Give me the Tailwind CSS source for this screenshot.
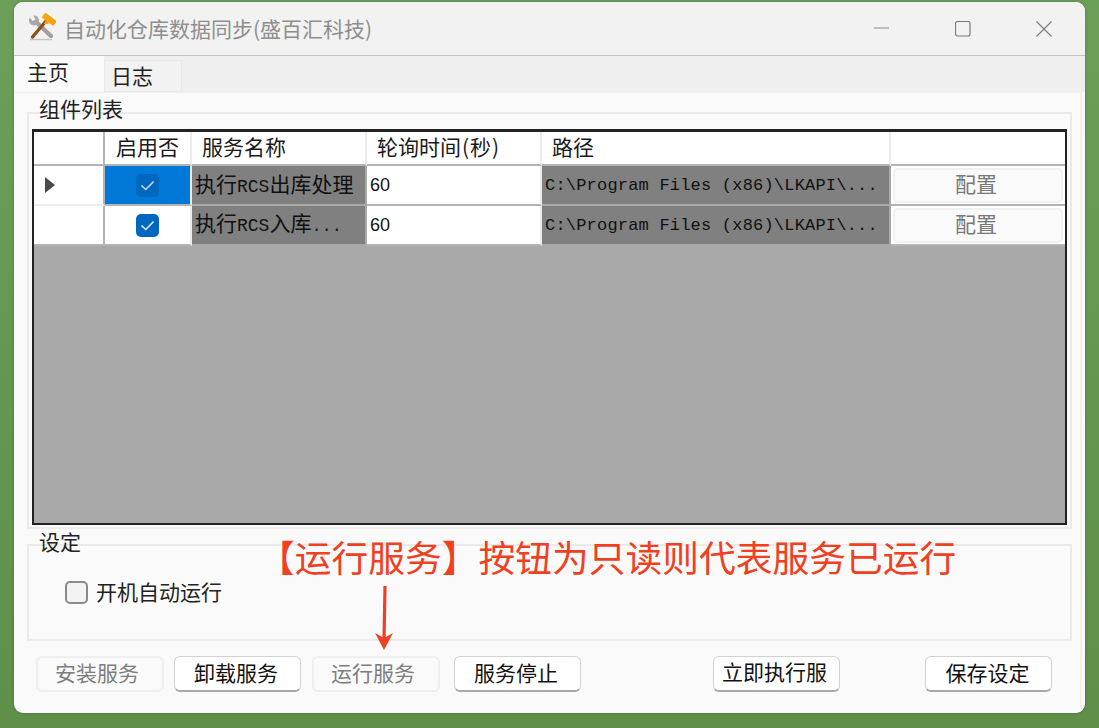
<!DOCTYPE html>
<html lang="zh">
<head>
<meta charset="utf-8">
<script src="https://cdn.jsdelivr.net/npm/@tailwindcss/browser@4"></script>
</head>
<body class="w-[1099px] h-[728px] overflow-hidden bg-gradient-to-b from-[#6c9f58] to-[#5f8f48] font-['Noto_Sans_CJK_SC','Noto_Sans',sans-serif] text-[#1a1a1a]">
<div class="relative w-[1099px] h-[728px] pl-[14px] pt-[2px]">
  <div class="relative w-[1071px] h-[711px] rounded-[9px] overflow-hidden bg-[#fafafa] flex flex-col shadow-[0_0_3px_rgba(0,0,0,0.25)]">
    <!-- title bar -->
    <div class="h-[54px] shrink-0 bg-[#f2f2f2] border-b border-[#c2c2c2] flex items-center pl-[14px]">
      <svg width="28" height="32" viewBox="0 0 28 32" class="mr-[8px] shrink-0">
        <path d="M2 26.5 H24" stroke="#c5c5c5" stroke-width="1.5"/>
        <path d="M7 8 L23 23" stroke="#a0a0a0" stroke-width="4.4" stroke-linecap="round"/>
        <circle cx="6" cy="7.5" r="5" fill="#a8a8a8"/>
        <path d="M0 2 L4 0 L7.5 6.5 L4.5 8 Z" fill="#f2f2f2"/>
        <path d="M18 8 L4.5 24" stroke="#8a5418" stroke-width="3.4" stroke-linecap="round"/>
        <path d="M15.5 2 L27 10.5" stroke="#f4a411" stroke-width="6"/>
        <path d="M18 7 L16 11 L21 11 Z" fill="#f4a411"/>
      </svg>
      <span class="text-[21px] leading-[28px] pb-[2px] text-[#8e8e8e]">自动化仓库数据同步(盛百汇科技)</span>
      <div class="ml-auto flex items-center h-full">
        <svg width="16" height="16" viewBox="0 0 16 16" class="mr-[65px]"><path d="M0 7 H15" stroke="#8a8a8a" stroke-width="1"/></svg>
        <svg width="16" height="16" viewBox="0 0 16 16" class="mr-[65px]"><rect x="0.5" y="0.5" width="14.5" height="14.5" rx="2" fill="none" stroke="#7a7a7a" stroke-width="1.2"/></svg>
        <svg width="16" height="16" viewBox="0 0 16 16" class="mr-[33px]"><path d="M0.5 0.5 L15.5 15.5 M15.5 0.5 L0.5 15.5" stroke="#7a7a7a" stroke-width="1.1"/></svg>
      </div>
    </div>

    <!-- tab strip -->
    <div class="h-[36px] shrink-0 bg-[#efefef] flex items-end">
      <div class="w-[90px] h-[36px] bg-[#fafafa] pl-[13px] text-[21px] leading-[30px] text-[#222]">主页</div>
      <div class="w-[78px] h-[32px] bg-[#f2f2f2] border border-[#e8e8e8] pl-[6px] text-[21px] leading-[28px] text-[#222]">日志</div>
    </div>

    <!-- page body -->
    <div class="flex-1 flex flex-col pl-[13px] pr-[8px] mr-[3px] border-t border-[#f0f0f0] border-r-[2px] border-r-[#f0f0f0]">
      <!-- group: component list -->
      <div class="relative mt-[19px] h-[417px] border-[2px] border-[#eaeaea] pl-[3px] pr-[3px] pt-[15px]">
        <span class="absolute left-[7px] -top-[20px] px-[3px] text-[21px] leading-[28px] text-[#222]">组件列表</span>
        <div class="h-[396px] border-[2px] border-t-[3px] border-[#222] bg-[#a9a9a9] overflow-hidden">
          <div class="grid grid-cols-[71px_87px_175px_175px_349px_174px] grid-rows-[34px_40px_40px] text-[21px] leading-[28px]">
            <!-- header -->
            <div class="bg-white border-r-[2px] border-b-[2px] border-[#b4b4b4]"></div>
            <div class="bg-white border-r-[2px] border-b-[2px] border-r-[#ececec] border-b-[#b4b4b4] text-center">启用否</div>
            <div class="bg-white border-r-[2px] border-b-[2px] border-r-[#ececec] border-b-[#b4b4b4] pl-[10px]">服务名称</div>
            <div class="bg-white border-r-[2px] border-b-[2px] border-r-[#ececec] border-b-[#b4b4b4] pl-[10px] whitespace-nowrap">轮询时间<span class="px-[1px]">(</span>秒<span class="px-[1px]">)</span></div>
            <div class="bg-white border-r-[2px] border-b-[2px] border-r-[#ececec] border-b-[#b4b4b4] pl-[10px]">路径</div>
            <div class="bg-white border-b-[2px] border-b-[#b4b4b4]"></div>
            <!-- row 1 -->
            <div class="bg-white border-r-[2px] border-b-[2px] border-r-[#b4b4b4] border-b-[#ececec] flex items-center pl-[11px]">
              <svg width="10" height="16" viewBox="0 0 10 16"><path d="M0 0 L10 8 L0 16 Z" fill="#4a4a4a"/></svg>
            </div>
            <div class="bg-[#0078d7] border-r-[2px] border-b-[2px] border-r-[#ececec] border-b-[#b4b4b4] flex items-center justify-center">
              <span class="w-[23px] h-[23px] rounded-[5px] bg-[#0067c0] flex items-center justify-center">
                <svg width="13" height="11" viewBox="0 0 13 11"><path d="M0.5 5.5 L4.8 9.5 L12.5 1.5" fill="none" stroke="#bcd7ee" stroke-width="1.6"/></svg>
              </span>
            </div>
            <div class="bg-[#808080] border-r-[2px] border-b-[2px] border-[#a9a9a9] pl-[3px] pb-[1px] flex items-center whitespace-nowrap text-[#111]"><span>执行<span class="font-['Liberation_Mono'] text-[18px]">RCS</span>出库处理</span></div>
            <div class="bg-white border-r-[2px] border-b-[2px] border-r-[#ececec] border-b-[#b4b4b4] pl-[3px] flex items-center text-[18px] font-['Liberation_Sans'] text-[#111]">60</div>
            <div class="bg-[#808080] border-r-[2px] border-b-[2px] border-[#a9a9a9] pl-[3px] pt-[2px] flex items-center whitespace-nowrap font-['Liberation_Mono'] text-[17px] tracking-[0.2px] text-[#111]">C:\Program Files (x86)\LKAPI\...</div>
            <div class="bg-white border-b-[2px] border-b-[#b4b4b4] p-[2px] pb-[1px]">
              <div class="h-full rounded-[5px] bg-[#fafafa] border-[2px] border-[#f0f0f0] pr-[4px] text-center text-[#777] leading-[26px]">配置</div>
            </div>
            <!-- row 2 -->
            <div class="bg-white border-r-[2px] border-b-[2px] border-r-[#b4b4b4] border-b-[#b4b4b4]"></div>
            <div class="bg-white border-r-[2px] border-b-[2px] border-r-[#ececec] border-b-[#b4b4b4] flex items-center justify-center">
              <span class="w-[23px] h-[23px] rounded-[5px] bg-[#0067c0] flex items-center justify-center">
                <svg width="13" height="11" viewBox="0 0 13 11"><path d="M0.5 5.5 L4.8 9.5 L12.5 1.5" fill="none" stroke="#d8e8f6" stroke-width="1.6"/></svg>
              </span>
            </div>
            <div class="bg-[#808080] border-r-[2px] border-b-[2px] border-[#a9a9a9] pl-[3px] pb-[1px] flex items-center whitespace-nowrap text-[#111]"><span>执行<span class="font-['Liberation_Mono'] text-[18px]">RCS</span>入库<span class="font-['Liberation_Mono'] text-[17px]">...</span></span></div>
            <div class="bg-white border-r-[2px] border-b-[2px] border-r-[#ececec] border-b-[#b4b4b4] pl-[3px] flex items-center text-[18px] font-['Liberation_Sans'] text-[#111]">60</div>
            <div class="bg-[#808080] border-r-[2px] border-b-[2px] border-[#a9a9a9] pl-[3px] pt-[2px] flex items-center whitespace-nowrap font-['Liberation_Mono'] text-[17px] tracking-[0.2px] text-[#111]">C:\Program Files (x86)\LKAPI\...</div>
            <div class="bg-white border-b-[2px] border-b-[#b4b4b4] p-[2px] pb-[1px]">
              <div class="h-full rounded-[5px] bg-[#fafafa] border-[2px] border-[#f0f0f0] pr-[4px] text-center text-[#777] leading-[26px]">配置</div>
            </div>
          </div>
        </div>
      </div>

      <!-- group: settings -->
      <div class="relative mt-[15px] h-[97px] border-[2px] border-[#eaeaea] flex items-center pl-[36px]">
        <span class="absolute left-[7px] -top-[19px] px-[3px] text-[21px] leading-[28px] text-[#222]">设定</span>
        <span class="w-[23px] h-[23px] rounded-[5px] bg-[#f3f3f3] border-[2px] border-[#8a8a8a] mr-[8px]"></span>
        <span class="text-[21px] leading-[28px] pb-[4px] text-[#222]">开机自动运行</span>
      </div>

      <!-- buttons -->
      <div class="mt-[15px] h-[36px] flex pl-[9px] text-[21px] leading-[28px]">
        <button class="w-[128px] h-[36px] rounded-[6px] bg-[#fafafa] border-[2px] border-[#efefef] text-[#7d7d7d] pb-[4px] pr-[6px]">安装服务</button>
        <button class="ml-[10px] w-[127px] h-[36px] rounded-[6px] bg-white border border-[#d2d2d2] border-b-[2px] border-b-[#a8a8a8] text-[#111] pb-[4px] pr-[3px]">卸载服务</button>
        <button class="ml-[11px] w-[128px] h-[36px] rounded-[6px] bg-[#fafafa] border-[2px] border-[#efefef] text-[#7d7d7d] pb-[4px] pr-[6px]">运行服务</button>
        <button class="ml-[14px] w-[127px] h-[36px] rounded-[6px] bg-white border border-[#d2d2d2] border-b-[2px] border-b-[#a8a8a8] text-[#111] pb-[4px] pr-[3px]">服务停止</button>
        <button class="ml-[132px] w-[127px] h-[36px] rounded-[6px] bg-white border border-[#d2d2d2] border-b-[2px] border-b-[#a8a8a8] text-[#111] pb-[7px] pr-[4px]">立即执行服</button>
        <button class="ml-[85px] w-[127px] h-[36px] rounded-[6px] bg-white border border-[#d2d2d2] border-b-[2px] border-b-[#a8a8a8] text-[#111] pb-[4px] pr-[2px]">保存设定</button>
      </div>
    </div>
  </div>

  <!-- annotation overlay -->
  <div class="absolute left-[258px] top-[532px] text-[36.75px] leading-[48px] text-[#f0401f] whitespace-nowrap">【运行服务】按钮为只读则代表服务已运行</div>
  <svg class="absolute left-[372px] top-[584px]" width="24" height="68" viewBox="0 0 24 68">
    <path d="M13 2 L12 56" stroke="#ee4026" stroke-width="3.2" fill="none"/>
    <path d="M3 49 L12 66 L21 49 L12 54 Z" fill="#ee4026"/>
  </svg>
</div>
</body>
</html>
